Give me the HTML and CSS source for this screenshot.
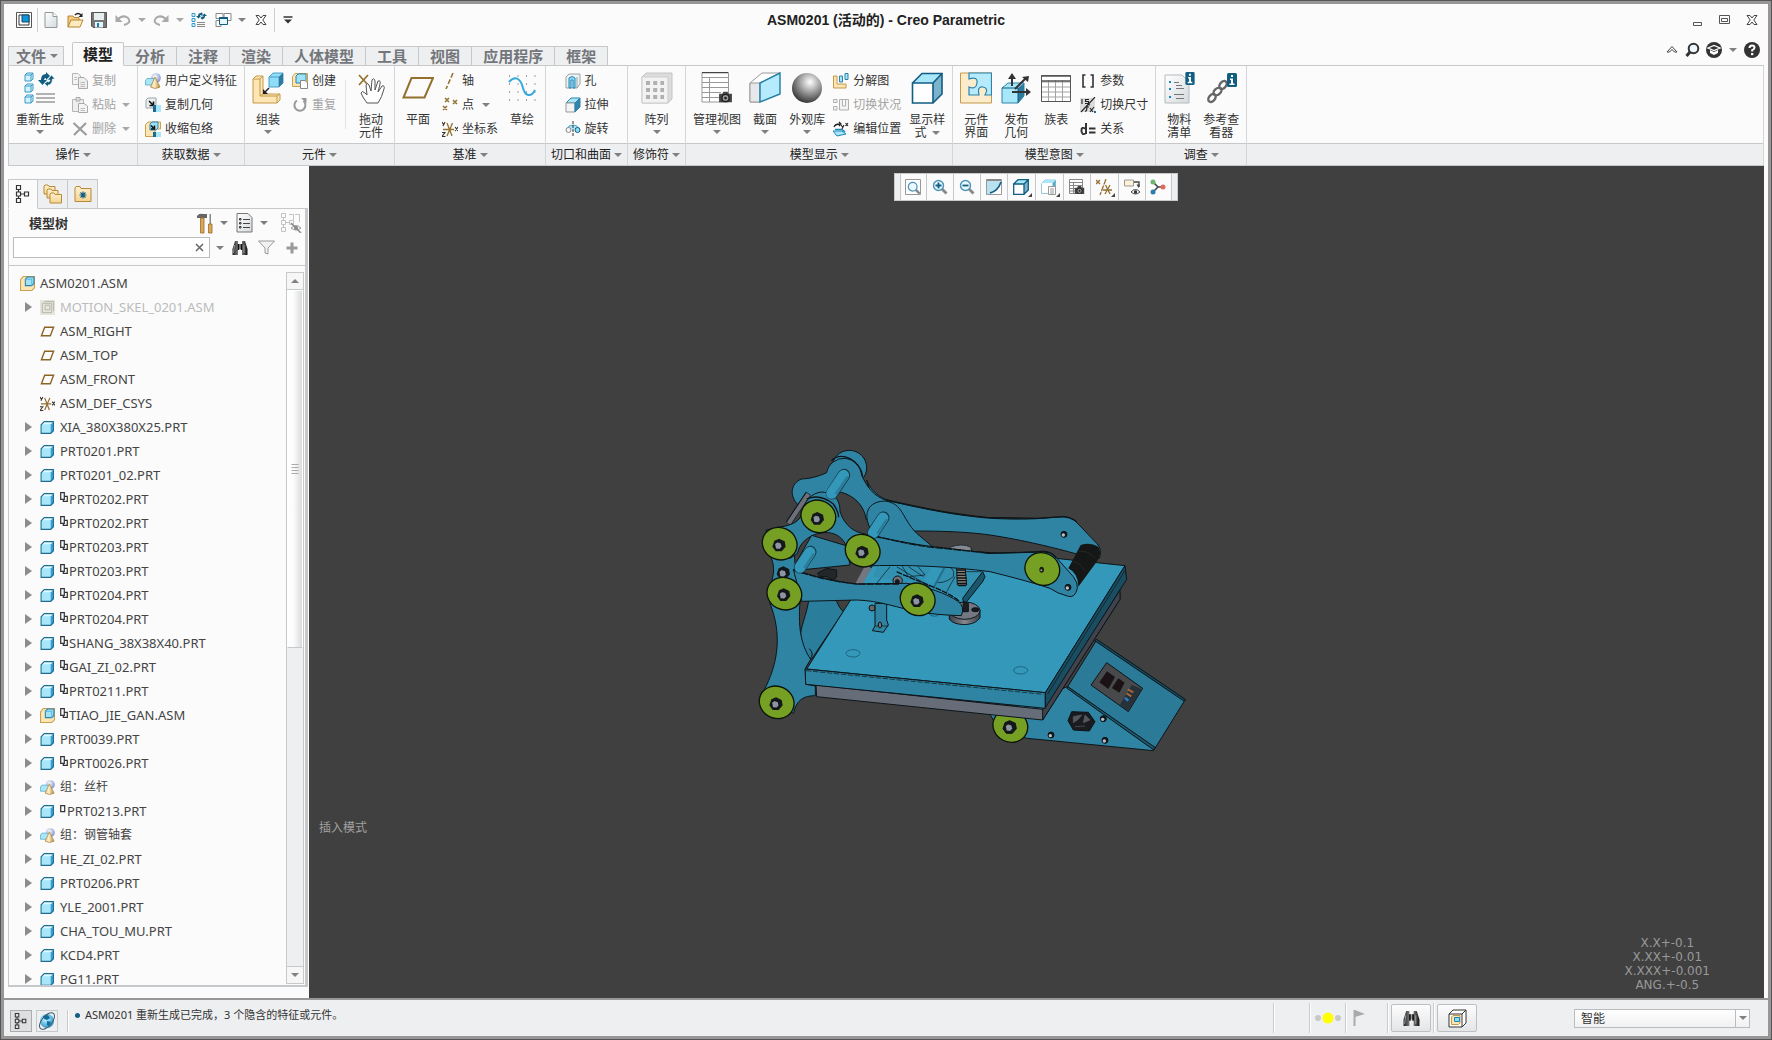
FILE: index.html
```html
<!DOCTYPE html>
<html lang="zh-CN">
<head>
<meta charset="utf-8">
<title>ASM0201 (活动的) - Creo Parametric</title>
<link rel="stylesheet" href="styles.css">
</head>
<body>
<svg class="sprite" aria-hidden="true">
  <defs>
    <linearGradient id="g-sheet" x1="0" y1="0" x2="1" y2="1"><stop offset="0" stop-color="#fff"/><stop offset="1" stop-color="#d5dadd"/></linearGradient>
    <linearGradient id="g-cone" x1="0" y1="0" x2="1" y2="0"><stop offset="0" stop-color="#e9cf8e"/><stop offset=".4" stop-color="#fdf0cd"/><stop offset="1" stop-color="#b98a3a"/></linearGradient>
    <linearGradient id="g-folder" x1="0" y1="0" x2="0" y2="1"><stop offset="0" stop-color="#fff1d0"/><stop offset="1" stop-color="#f4d491"/></linearGradient>
    <linearGradient id="g-dark" x1="0" y1="0" x2="1" y2="0"><stop offset="0" stop-color="#222"/><stop offset=".5" stop-color="#999"/><stop offset="1" stop-color="#111"/></linearGradient>
    <radialGradient id="g-ball" cx=".6" cy=".3" r=".7"><stop offset="0" stop-color="#fff"/><stop offset=".35" stop-color="#bbb"/><stop offset="1" stop-color="#3a3a3a"/></radialGradient>
    <radialGradient id="g-orb" cx=".4" cy=".35" r=".7"><stop offset="0" stop-color="#fff"/><stop offset="1" stop-color="#7b8cc8"/></radialGradient>
    <radialGradient id="g-globe" cx=".4" cy=".35" r=".7"><stop offset="0" stop-color="#dff5fd"/><stop offset=".5" stop-color="#6cc4e8"/><stop offset="1" stop-color="#2b8dbd"/></radialGradient>
  </defs>
  <symbol id="part" viewBox="0 0 14 14"><path d="M1 4 4 1H13V10L10 13H1Z" fill="#a8e6fa"/><path d="M10 4 13 1V10L10 13Z" fill="#3d9fd0"/><path d="M1 4 4 1H13L10 4Z" fill="#e6f9ff"/><path d="M1 4.500V12.500H10L12.500 10V1.500H4Z" fill="none" stroke="#1c6d94"/></symbol>
  <symbol id="asm" viewBox="0 0 14 14"><path d="M.5 3.500 3 .5H13.500V11L11 13.500H.5Z" fill="#fde5b4" stroke="#c9a050"/><path d="M5 3 7 1H13V7L11 9H5Z" fill="#9fe2fa" stroke="#2c83ab"/><path d="M5 3H11V9" fill="none" stroke="#5db6dc"/></symbol>
  <symbol id="skel" viewBox="0 0 16 16"><path d="M0 0H16V16H0Z" fill="#e6e6dc"/><path d="M2.500 3.500H12.500V13.500H2.500ZM4.500 1.500H14.500V11.500M5.500 5.500H10.500V10.500H5.500Z" fill="none" stroke="#b4b4a4"/></symbol>
  <symbol id="plane" viewBox="0 0 16 12"><path d="M5 1.500H14.500L11 10.500H1.500Z" fill="none" stroke="#8a6526" stroke-width="1.500"/></symbol>
  <symbol id="csys" viewBox="0 0 16 16"><path d="M1 8.500H12M5 2 10 15M10.500 2 5 15" fill="none" stroke="#94702f" stroke-width="1.300"/><path d="M0 1 1.500 3.500M3 1 1 5M13 6 16 10M16 6 13 10M0 11.500H3L0 15.500H3.500" fill="none" stroke="#333" stroke-width="1.100"/></symbol>
  <symbol id="shapes" viewBox="0 0 16 16"><circle cx="11" cy="5" r="4.800" fill="url(#g-orb)"/><path d="M.5 7.500 2 5.500H9V12H.5Z" fill="#a8e6fa" stroke="#5aabcc" stroke-width=".8"/><path d="M10 4 5.500 14Q10 17 15 14Z" fill="url(#g-cone)" stroke="#a57a30" stroke-width=".7"/></symbol>
  <symbol id="link2" viewBox="0 0 8 10"><path d="M.7.7H4.300V7.300H.7ZM4.300 4.300H7.300V9.300H3.300V7.300" fill="none" stroke="#333" stroke-width="1.200"/></symbol>
  <symbol id="link1" viewBox="0 0 6 8"><path d="M.7.7H4.700V6.700H.7Z" fill="none" stroke="#333" stroke-width="1.200"/></symbol>
  <symbol id="binoc" viewBox="0 0 16 16"><path d="M3 1H6V4H10V1H13L15.500 9V15H10V9H6V15H.5V9Z" fill="url(#g-dark)"/><path d="M2.500 5 1.500 13M12 5V13" stroke="#ccc" stroke-width="1" opacity=".6"/><path d="M6.500 4V10M9.500 4V10" stroke="#111" stroke-width="1.500"/></symbol>
  <symbol id="tree" viewBox="0 0 16 20"><path d="M1.500 1.500H5.500V5.500H1.500ZM1.500 8H5.500V12H1.500ZM1.500 14.500H5.500V18.500H1.500ZM9.500 8H13.500V12H9.500ZM3.500 5.500V8M3.500 12V14.500M5.500 10H9.500" fill="none" stroke="currentColor" stroke-width="1.200"/></symbol>
  <symbol id="camera" viewBox="0 0 14 12"><path d="M1 3H4L5 1H9L10 3H13V11H1Z" fill="#444"/><circle cx="7" cy="7" r="3.300" fill="#999" stroke="#111"/><circle cx="7" cy="7" r="1.300" fill="#222"/></symbol>
  <symbol id="info" viewBox="0 0 10 14"><rect width="10" height="14" rx="1.500" fill="#125d82"/><path d="M4 2H6V4H4ZM3 5.500H6V10.500H7.500V12H2.500V10.500H4V7H3Z" fill="#fff"/></symbol>
  <symbol id="closeX" viewBox="0 0 12 12"><path d="M1 1.500H4L6 4 8 1.500H11L7.800 6 11 10.500H8L6 8 4 10.500H1L4.200 6Z" fill="none" stroke="#444"/></symbol>
  <symbol id="lens" viewBox="0 0 16 16"><path d="M9.500 9.500 14.500 14.500" stroke="#888" stroke-width="2.800"/><circle cx="6.500" cy="6.500" r="5" fill="#eaf8ff" stroke="#4b93b8" stroke-width="1.400"/></symbol>
  <symbol id="cube" viewBox="0 0 32 32"><path d="M1.500 11 11 1.500H31V22L22 31H1.500Z" fill="#fff"/><path d="M1.500 11 11 1.500H31L22 11Z" fill="#a8e6fa"/><path d="M22 11 31 1.500V22L22 31Z" fill="#7ab4cc"/><path d="M1.500 11H22V31H1.500ZM1.500 11 11 1.500H31L22 11M31 1.500V22L22 31" fill="none" stroke="#125d82" stroke-width="1.600"/></symbol>
  <symbol id="cubeSmall" viewBox="0 0 16 16"><path d="M.7 5 5 .7H15.300V11L11 15.300H.7Z" fill="#fff"/><path d="M.7 5 5 .7H15.300L11 5Z" fill="#a8e6fa"/><path d="M11 5 15.300.7V11L11 15.300Z" fill="#7ab4cc"/><path d="M.7 5H11V15.300H.7ZM.7 5 5 .7H15.300L11 5M15.300.7V11L11 15.300" fill="none" stroke="#125d82" stroke-width="1.300"/></symbol>
</svg>

<div class="window">
  <header class="titlebar">
    <div class="quick">
      <button class="ib" aria-label="应用程序"><svg width="16" height="16"><path d="M.5.5H15.500V15.500H.5Z" fill="#fff" stroke="#555"/><path d="M3 3H13V13H3Z" fill="#fff" stroke="#333"/><path d="M6 3H13V10H6Z" fill="#0f93dc" stroke="#134a66"/></svg></button>
      <span class="vsep"></span>
      <button class="ib" aria-label="新建"><svg width="14" height="16"><path d="M1 .5H9L13 4.500V15.500H1Z" fill="url(#g-sheet)" stroke="#8d979c"/><path d="M9 .5V4.500H13" fill="#fff" stroke="#8d979c"/></svg></button>
      <button class="ib" aria-label="打开"><svg width="17" height="16"><path d="M1 15V4H6L7 5.500H12V8" fill="#f2cd83" stroke="#b5862f"/><path d="M1 15 4 8H16L13 15Z" fill="#fdeac0" stroke="#b5862f"/><path d="M8 3Q11 0 14 3" fill="none" stroke="#222" stroke-width="1.500"/><path d="M15.500 1V5H11.500Z" fill="#222"/></svg></button>
      <button class="ib" aria-label="保存"><svg width="16" height="16"><path d="M.5.500H15.500V15.500H2L.5 14Z" fill="#777" stroke="#555"/><path d="M3 1H13V8H3Z" fill="#e8eef0"/><path d="M4 10H12V15.500H4Z" fill="#e3f4fb"/><path d="M6 11H8V15H6Z" fill="#1a7fae"/></svg></button>
      <button class="ib" aria-label="撤消"><svg width="16" height="12"><path d="M2 6Q8 0 13 4 17 9 9 11" fill="none" stroke="#a9a9a9" stroke-width="2"/><path d="M.5 1V8H7.500Z" fill="#a9a9a9"/></svg></button>
      <button class="ib narrow" aria-label="撤消列表"><i class="caret light"></i></button>
      <button class="ib" aria-label="重做"><svg width="16" height="12"><path d="M14 6Q8 0 3 4-1 9 7 11" fill="none" stroke="#a9a9a9" stroke-width="2"/><path d="M15.500 1V8H8.500Z" fill="#a9a9a9"/></svg></button>
      <button class="ib narrow" aria-label="重做列表"><i class="caret light"></i></button>
      <button class="ib" aria-label="重新生成"><svg width="16" height="16"><path d="M1 1.500H4V4.500H1ZM1 6.500H4V9.500H1ZM1 11.500H4V14.500H1Z" fill="#d9f4ff" stroke="#3a9bc8"/><path d="M6 10.500H14M6 12.500H14M6 14.500H14" stroke="#888"/><path d="M5 4H7Q7 1 10 1V0L12 2 10 4V3Q9 3 9 4H10L7.500 6.500ZM16 4H14Q14 7 11.500 7V8L9.500 6 11.500 4V5Q12.500 5 12.500 4H11L13.500 1.500Z" fill="#125d82"/></svg></button>
      <button class="ib" aria-label="窗口"><svg width="17" height="16"><path d="M1 1.500H8V6.500H1ZM9 1.500H16V8.500H9ZM1 8.500H6V14.500H1Z" fill="#fff" stroke="#888"/><path d="M4.500 5.500H12.500V12.500H4.500Z" fill="#e6f7ff" stroke="#125d82"/><path d="M4.500 6H12.500" stroke="#125d82" stroke-width="2"/></svg></button>
      <button class="ib narrow" aria-label="窗口列表"><i class="caret"></i></button>
      <button class="ib" aria-label="关闭"><svg width="12" height="12"><use href="#closeX"/></svg></button>
      <span class="vsep"></span>
      <button class="ib" aria-label="自定义快速访问工具栏"><svg width="10" height="8"><path d="M.5 1H9.500" stroke="#333" stroke-width="1.500"/><path d="M1 3.500H9L5 7.500Z" fill="#333"/></svg></button>
    </div>
    <h1 class="title">ASM0201 (活动的) - Creo Parametric</h1>
    <div class="winctl">
      <button class="ib wide" aria-label="最小化"><svg width="12" height="12"><path d="M1.500 8.500H9.500V11.500H1.500Z" fill="none" stroke="#555"/></svg></button>
      <button class="ib wide" aria-label="最大化"><svg width="12" height="12"><path d="M.5 1.500H10.500V9.500H.5ZM2.500 4.500H8.500V7.500H2.500Z" fill="none" stroke="#555"/></svg></button>
      <button class="ib wide" aria-label="关闭窗口"><svg width="12" height="12"><use href="#closeX"/></svg></button>
    </div>
  </header>

  <div class="tabrow">
    <button class="tab file">文件<i class="caret"></i></button>
    <nav class="tabs">
      <button class="tab active">模型</button><button class="tab">分析</button><button class="tab">注释</button><button class="tab">渲染</button><button class="tab">人体模型</button><button class="tab">工具</button><button class="tab">视图</button><button class="tab">应用程序</button><button class="tab">框架</button>
    </nav>
    <div class="help">
      <button class="ib nar20" aria-label="折叠功能区"><svg width="12" height="10"><path d="M1 7 6 1.500 11 7H8.500L6 4.500 3.500 7Z" fill="none" stroke="#444"/></svg></button>
      <button class="ib nar20" aria-label="搜索"><svg width="15" height="16"><circle cx="8.500" cy="6.500" r="4.800" fill="#eef9ff" stroke="#333" stroke-width="2"/><path d="M5 10 1.500 14" stroke="#333" stroke-width="3"/></svg></button>
      <button class="ib" aria-label="学习"><svg width="16" height="16"><circle cx="8" cy="8" r="8" fill="#333"/><path d="M2 6 8 3.500 14 6 8 8.500Z" fill="#333" stroke="#fff" stroke-width="1.300"/><path d="M4 8V11L8 13 12 11V8L8 10Z" fill="#fff"/></svg></button>
      <button class="ib narrow" aria-label="学习列表"><i class="caret"></i></button>
      <button class="ib" aria-label="帮助"><svg width="16" height="16"><circle cx="8" cy="8" r="8" fill="#333"/><path d="M5.500 6Q5.500 3.500 8 3.500 10.500 3.500 10.500 5.800 10.500 7.200 8.200 8.200V9.500" fill="none" stroke="#fff" stroke-width="2"/><path d="M7 11H9.300V13.200H7Z" fill="#fff"/></svg></button>
    </div>
  </div>

  <section class="ribbon">
    <div class="group"><div class="gbody">
      <button class="big"><svg viewBox="0 0 32 32"><g fill="#d2f2fd" stroke="#3a9bc8"><path d="M1 3 3 1H9V7L7 9H1ZM1 14 3 12H9V18L7 20H1ZM1 25 3 23H9V29L7 31H1Z"/><path d="M1 3H7V9M7 3 9 1M1 14H7V20M7 14 9 12M1 25H7V31M7 25 9 23" fill="none"/></g><path d="M12 22H31M12 26H31M12 30H31" stroke="#9a9a9a" stroke-width="1.600"/><path d="M14 8H17Q17 2 22 2V0L26 4 22 8V6Q20 6 20 8H23L18.500 13Z" fill="#125d82"/><path d="M31 7H28.500Q28 13 24 13V15L20.500 11.500 24 9V10Q26 10 26 8H23.500L27.500 3Z" fill="#125d82" stroke="#fbfbfb" stroke-width=".6"/></svg><span>重新生成</span><i class="caret"></i></button>
      <div class="col">
        <button class="small off"><svg viewBox="0 0 16 16"><path d="M.5.500H6L8.500 3V11.500H.5Z" fill="#f3f3f3" stroke="#b5b5b5"/><path d="M6.500 4.500H12L15.500 8V15.500H6.500Z" fill="#eee" stroke="#aaa"/><path d="M8.500 9.500H13M8.500 11.500H13M8.500 13.500H13M2.500 4.500H5M2.500 6.500H5" stroke="#bbb"/></svg>复制</button>
        <button class="small off"><svg viewBox="0 0 16 16"><path d="M.5 2.500H11.500V14.500H.5Z" fill="#eee" stroke="#b5b5b5"/><path d="M4 .5H8V4H4Z" fill="#ddd" stroke="#aaa"/><path d="M6.500 6.500H12L15.500 9V15.500H6.500Z" fill="#f5f5f5" stroke="#aaa"/><path d="M8.500 11.500H13M8.500 13.500H13" stroke="#bbb"/></svg>粘贴<i class="caret light"></i></button>
        <button class="small off"><svg viewBox="0 0 16 16"><path d="M1.500 2 14.500 14M14 2 2 14" stroke="#9c9c9c" stroke-width="2.200"/></svg>删除<i class="caret light"></i></button>
      </div></div><button class="glabel">操作<i class="caret"></i></button></div>

    <div class="group"><div class="gbody">
      <div class="col">
        <button class="small"><svg><use href="#shapes"/></svg>用户定义特征</button>
        <button class="small"><svg viewBox="0 0 16 16"><path d="M1 3 3 1H11V9L9 11H1Z" fill="#eceff0" stroke="#9aa4a8"/><path d="M4 4 8 8M8.500 4.500V8.500H4.500" stroke="#111" stroke-width="1.600" fill="none"/><path d="M8 8H11V15H8Z" fill="#1a6c93"/><path d="M11 8H16V15H11Z" fill="#a8e6fa"/></svg>复制几何</button>
        <button class="small"><svg viewBox="0 0 16 16"><path d="M.5 3.500 3 1H15.500V8H10V15.500H.5Z" fill="#fde5b4" stroke="#c9a050"/><path d="M5 3 7 1H13V7L11 9H5Z" fill="#9fe2fa" stroke="#2c83ab"/><path d="M6 4.500 9.500 8M9.500 4.500V8H6" stroke="#111" stroke-width="1.500" fill="none"/><path d="M8 11H11V16H8Z" fill="#1a6c93"/><path d="M11 11H16V16H11Z" fill="#a8e6fa"/></svg>收缩包络</button>
      </div></div><button class="glabel">获取数据<i class="caret"></i></button></div>

    <div class="group"><div class="gbody">
      <button class="big"><svg viewBox="0 0 32 32"><path d="M1 7 4 4H11V22H28V28L25 31H1Z" fill="#fde5b4" stroke="#c49a48"/><path d="M8 7V24H25V31M1 7H8L11 4M8 24 11 22M25 24 28 22" fill="none" stroke="#c49a48"/><path d="M17 5 21 1H31V11L27 15H17Z" fill="#8fdcf8" stroke="#4b9fc4"/><path d="M17 5H27V15M27 5 31 1" fill="none" stroke="#4b9fc4"/><path d="M27 5 31 1V11L27 15Z" fill="#2f7ba0"/><path d="M17 16 12 21" stroke="#222" stroke-width="1.500"/><path d="M11 17V22H16Z" fill="#222"/></svg><span>组装</span><i class="caret"></i></button>
      <div class="col">
        <button class="small"><svg viewBox="0 0 16 16"><path d="M.5 3.500 3 .5H15.500V11L13 13.500H.5Z" fill="#fde5b4" stroke="#c9a050"/><path d="M4 3 6 1H14V8L12 10H4Z" fill="#9fe2fa" stroke="#2c83ab"/><path d="M8.500 7.500H13L15.500 10V15.500H8.500Z" fill="#fff" stroke="#888"/></svg>创建</button>
        <button class="small off"><svg viewBox="0 0 16 16"><path d="M11.500 4A5.500 5.500 0 1 1 5 3.500" fill="none" stroke="#999" stroke-width="2"/><path d="M9 1H14.500V6.500Z" fill="#999"/></svg>重复</button>
      </div>
      <span class="gsep"></span>
      <button class="big"><svg viewBox="0 0 32 32"><path d="M4 3 13 13M13 3 4 13" stroke="#94702f" stroke-width="1.700"/><path d="M12 31Q8 26 6 21 7 18 10 21L12 23 11 13Q12 10 14 13L16 19 17 8Q19 5 20 9L20 18 23 9Q26 8 25 12L23 20 27 14Q30 13 29 17 27 25 23 31Z" fill="#fff" stroke="#555"/></svg><span>拖动<br>元件</span></button>
      </div><button class="glabel">元件<i class="caret"></i></button></div>

    <div class="group"><div class="gbody">
      <button class="big"><svg viewBox="0 0 32 32"><path d="M9.500 6H31L22.500 25.500H1.500Z" fill="none" stroke="#94702f" stroke-width="2"/></svg><span>平面</span></button>
      <div class="col">
        <button class="small"><svg viewBox="0 0 16 16"><path d="M11 0 4 16" stroke="#94702f" stroke-width="1.500" stroke-dasharray="5 2"/></svg>轴</button>
        <button class="small"><svg viewBox="0 0 16 16"><path d="M3 1 7 5M7 1 3 5M11 3 15 7M15 3 11 7M1 9 5 13M5 9 1 13" stroke="#94702f" stroke-width="1.500"/></svg>点<i class="caret far"></i></button>
        <button class="small"><svg><use href="#csys"/></svg>坐标系</button>
      </div>
      <button class="big"><svg viewBox="0 0 32 32"><path d="M3 4H30M3 12H30M3 20H30M3 28H30" stroke="#444" stroke-dasharray="1 7.500"/><path d="M3 10C10 2 15 8 17 16S25 26 29 18" fill="none" stroke="#37a9dc" stroke-width="2"/></svg><span>草绘</span></button>
      </div><button class="glabel">基准<i class="caret"></i></button></div>

    <div class="group"><div class="gbody">
      <div class="col">
        <button class="small"><svg viewBox="0 0 16 16"><path d="M1 4 4 1H15V11L12 15H1Z" fill="#eef1f2" stroke="#9aa4a8"/><path d="M4 5Q7 2 10 5V15H8V7H6V15H4Z" fill="#8fdcf8" stroke="#1f87b5"/><path d="M12 4V15" stroke="#9aa4a8"/></svg>孔</button>
        <button class="small"><svg viewBox="0 0 16 16"><path d="M1 6 6 1H15L10 6Z" fill="#a8e6fa" stroke="#2c83ab"/><path d="M1 6H10V15H1Z" fill="#f4f4f4" stroke="#999"/><path d="M10 6 15 1V10L10 15Z" fill="#3186ad" stroke="#2c83ab"/></svg>拉伸</button>
        <button class="small"><svg viewBox="0 0 16 16"><path d="M2 8Q3 4 8 4T14 8" fill="#a8e6fa" stroke="#5daac8"/><circle cx="3.500" cy="9" r="2.500" fill="#f7f7f7" stroke="#888"/><circle cx="12.500" cy="9" r="2.500" fill="#8fdcf8" stroke="#125d82"/><path d="M8 0V16" stroke="#333" stroke-dasharray="3 1"/></svg>旋转</button>
      </div></div><button class="glabel">切口和曲面<i class="caret"></i></button></div>

    <div class="group"><div class="gbody">
      <button class="big"><svg viewBox="0 0 32 32"><path d="M1 5 5 1H31V27L27 31H1Z" fill="#dcdcdc" stroke="#c4c4c4"/><path d="M1 5H27V31H1Z" fill="#f2f2f2" stroke="#ccc"/><path d="M5 11H23M5 18H23M5 25H23" stroke="#b0b0b0" stroke-width="4" stroke-dasharray="4 3.200"/></svg><span>阵列</span><i class="caret"></i></button>
      </div><button class="glabel">修饰符<i class="caret"></i></button></div>

    <div class="group"><div class="gbody">
      <button class="big"><svg viewBox="0 0 32 32"><path d="M1 .5H27.500V30H1Z" fill="#fff" stroke="#999"/><path d="M1 5.500H27M1 10.500H27M1 15.500H27M1 20.500H20M1 25.500H20M8.500 5V30" stroke="#999"/><path d="M1 .5H27" stroke="#444" stroke-width="1.500"/><use href="#camera" x="17" y="18" width="15" height="14"/></svg><span>管理视图</span><i class="caret"></i></button>
      <button class="big"><svg viewBox="0 0 32 32"><path d="M1 11 13 1H31L11 11V30H1Z" fill="#fff" stroke="#999"/><path d="M1 11H11V30H1Z" fill="#e6e8e9" stroke="#999"/><path d="M11 11 31 1V22L11 30Z" fill="#b5ebfc" stroke="#1f7ca5" stroke-width="1.400"/></svg><span>截面</span><i class="caret"></i></button>
      <button class="big"><svg viewBox="0 0 32 32"><circle cx="16" cy="16" r="15" fill="url(#g-ball)"/></svg><span>外观库</span><i class="caret"></i></button>
      <div class="col">
        <button class="small"><svg viewBox="0 0 16 16"><path d="M.5 3H4V11H13V15H.5Z" fill="#fde5b4" stroke="#c49a48"/><path d="M6.500 3H9.500V9H6.500ZM12 .5H15V6.500H12Z" fill="#a8e6fa" stroke="#2c83ab"/></svg>分解图</button>
        <button class="small off"><svg viewBox="0 0 16 16"><path d="M.5 2.500H4V5.500H.5ZM.5 9.500H4V13H.5ZM6.500 2.500H15.500V13H6.500ZM9.500 2.500V9H12.500V2.500" fill="#f2f2f2" stroke="#b0b0b0"/></svg>切换状况</button>
        <button class="small"><svg viewBox="0 0 16 16"><path d="M1 6Q2 3 7 3M6 1 8 3 6 5" fill="none" stroke="#222" stroke-width="1.300"/><path d="M8 4 9.500 6M11 4 9 8M12.500 2 15 5M15 2 12.500 5" stroke="#222" stroke-width="1.100"/><path d="M0 10H9L13 13 4 15Z" fill="#a8e6fa" stroke="#1f87b5"/><path d="M2 8.500H9L12 11" fill="none" stroke="#1f87b5" stroke-width="1.500"/></svg>编辑位置</button>
      </div>
      <button class="big"><svg><use href="#cube"/></svg><span>显示样<br>式 <i class="caret"></i></span></button>
      </div><button class="glabel">模型显示<i class="caret"></i></button></div>

    <div class="group"><div class="gbody">
      <button class="big"><svg viewBox="0 0 32 32"><path d="M.5 1H31.500V31H.5Z" fill="#fdeccb" stroke="#c49a48"/><path d="M9 1H31.500V23H25Q29 16 23 15T19 23H9V15Q16 18 17 11T9 7Z" fill="#b5ebfc" stroke="#2c83ab" stroke-width="1.200"/></svg><span>元件<br>界面</span></button>
      <button class="big"><svg viewBox="0 0 32 32"><path d="M2 16 8 11H24V24L18 31H2Z" fill="#a8e6fa" stroke="#2c83ab"/><path d="M18 16 24 11V24L18 31Z" fill="#2f7ba0"/><path d="M2 16H18V31" fill="none" stroke="#125d82"/><path d="M12 14V4M12 20H28M15 17 26 6" stroke="#333" stroke-width="2"/><path d="M12 1 16 7H8ZM31 20 26 24V16ZM29 4 28 10 22 5Z" fill="#333"/></svg><span>发布<br>几何</span></button>
      <button class="big"><svg viewBox="0 0 32 32"><path d="M1.500 3.500H30.500V29.500H1.500Z" fill="#fff" stroke="#555"/><path d="M2 10H30M2 15H30M2 20H30M2 25H30M8.500 8V29M15.500 8V29M22.500 8V29" stroke="#a3a3a3"/><path d="M1 4H31M1 9H31" stroke="#555" stroke-width="1.500"/></svg><span>族表</span></button>
      <div class="col">
        <button class="small"><svg viewBox="0 0 16 16"><path d="M5.500 2H3V14H5.500M10.500 2H13V14H10.500" fill="none" stroke="#333" stroke-width="1.600"/></svg>参数</button>
        <button class="small"><svg viewBox="0 0 16 16"><path d="M0 1H15V15H0Z" fill="#dcdcdc"/><path d="M2 2V7M5 6.500H8.500V4.500H5.500V2.500H9M15 0 1 15M5 14Q7 15 7 9 8 7 10 8M5.500 10H9M10 11 13 15M14 10 10 15" fill="none" stroke="#222" stroke-width="1.100"/><path d="M14 14H16V16H14Z" fill="#0f75a8"/></svg>切换尺寸</button>
        <button class="small"><svg viewBox="0 0 16 16"><path d="M6 2V13M6 8Q1 5 1.500 10T6 12M9 7.500H15.500M9 11.500H15.500" fill="none" stroke="#333" stroke-width="2"/></svg>关系</button>
      </div></div><button class="glabel">模型意图<i class="caret"></i></button></div>

    <div class="group"><div class="gbody">
      <button class="big"><svg viewBox="0 0 32 32"><path d="M2 3H19L26 10V31H2Z" fill="url(#g-sheet)" stroke="#b5babd"/><path d="M11 10.500H16M13 16.500H21M11 22.500H21M13 26.500H21M13 13.500H19" stroke="#777"/><path d="M6 9H8V11H6ZM6 16H8V18H6ZM6 24H8V26H6Z" fill="#1787bd"/><use href="#info" x="22" y="0" width="10" height="13"/></svg><span>物料<br>清单</span></button>
      <button class="big"><svg viewBox="0 0 32 32"><g fill="none" stroke="#666" stroke-width="2.400"><ellipse cx="7" cy="26" rx="4.500" ry="3" transform="rotate(-50 7 26)"/><ellipse cx="12.500" cy="19.500" rx="4.500" ry="3" transform="rotate(-40 12.500 19.500)"/><ellipse cx="18" cy="13" rx="4.500" ry="3" transform="rotate(-50 18 13)"/></g><use href="#info" x="22" y="1" width="10" height="14"/></svg><span>参考查<br>看器</span></button>
      </div><button class="glabel">调查<i class="caret"></i></button></div>
    <div class="group rest"><div class="gbody"></div><div class="glabel"></div></div>
  </section>

  <main class="work">
    <aside class="side">
      <div class="stabs">
        <button class="stab on" aria-label="模型树"><svg width="16" height="20"><use href="#tree"/></svg></button>
        <button class="stab" aria-label="文件夹浏览器"><svg width="20" height="20"><g fill="url(#g-folder)" stroke="#b8893a"><path d="M1 10V2L2 1H5L6 2.500H12V10Z"/><path d="M4 14V6L5 5H8L9 6.500H15V14Z"/><path d="M7 19V10L8 9H11L12 10.500H18.500V19Z"/></g></svg></button>
        <button class="stab" aria-label="收藏夹"><svg width="18" height="18"><path d="M1 16.500V3L2 1.500H6L7 3.500H17V16.500Z" fill="url(#g-folder)" stroke="#b8893a"/><path d="M9 6.500V13.500M5.500 10H12.500M6.500 7.500 11.500 12.500M11.500 7.500 6.500 12.500" stroke="#125d82" stroke-width="1.100"/></svg></button>
      </div>
      <div class="panel">
        <div class="phead">
          <h2>模型树</h2>
          <button class="ib nar20" aria-label="设置"><svg width="17" height="21"><path d="M1 3Q3 0 7 1H11V5H7L1 5Z" fill="#666"/><path d="M4.500 5H8V20H4.500Z" fill="#d9a65a" stroke="#9c6b26" stroke-width=".8"/><path d="M13.500 1H15V11H13.500Z" fill="#888"/><path d="M12.500 11H16V20H12.500Z" fill="#d9a65a" stroke="#9c6b26" stroke-width=".8"/></svg></button>
          <button class="ib nar20" aria-label="设置列表"><i class="caret"></i></button>
          <button class="ib nar20" aria-label="显示"><svg width="17" height="20"><path d="M1 .500H12L16 4.500V19H1Z" fill="url(#g-sheet)" stroke="#777"/><path d="M7 6.500H14M7 10.500H14M7 14.500H14" stroke="#444"/><path d="M3.500 5.500H5V7H3.500ZM3.500 9.500H5V11H3.500ZM3.500 13.500H5V15H3.500Z" fill="none" stroke="#333"/></svg></button>
          <button class="ib nar20" aria-label="显示列表"><i class="caret"></i></button>
          <button class="ib last" aria-label="隐藏"><svg width="21" height="20"><path d="M.5.500H4.500V4.500H.5ZM.5 7.500H4.500V11.500H.5ZM.5 14.500H4.500V18.500H.5ZM8.500 7.500H12.500V11.500H8.500ZM2.500 4.500V7.500M2.500 11.500V14.500M4.500 9.500H8.500M8 1.500H12.500V7M14 1.500H18.500V9" fill="none" stroke="#c3c3c3"/><path d="M10 15Q15 10 20 15 15 19 10 15Z" fill="#eee" stroke="#999"/><circle cx="15" cy="15" r="2" fill="#888"/><path d="M10 10 20 20" stroke="#888" stroke-width="1.500"/></svg></button>
        </div>
        <div class="psearch">
          <div class="sbox"><input type="text" aria-label="搜索模型树"><button class="clr" aria-label="清除"><svg width="9" height="9"><path d="M1 1 8 8M8 1 1 8" stroke="#666" stroke-width="1.500"/></svg></button></div>
          <button class="ib narrow" aria-label="搜索选项"><i class="caret"></i></button>
          <button class="ib mid" aria-label="查找"><svg width="16" height="16"><use href="#binoc"/></svg></button>
          <button class="ib mid" aria-label="过滤器"><svg width="17" height="15"><path d="M.5 1H16.500L10 8V14L7 13V8Z" fill="#f1f1f1" stroke="#999"/></svg></button>
          <button class="ib mid" aria-label="添加"><svg width="12" height="12"><path d="M6 .5V11.500M.5 6H11.500" stroke="#999" stroke-width="3"/></svg></button>
        </div>
        <div class="ptree">
          <ul class="nodes">
            <li class="root"><svg class="ic"><use href="#asm"/></svg>ASM0201.ASM</li>
            <li class="dim"><b></b><svg class="ic"><use href="#skel"/></svg>MOTION_SKEL_0201.ASM</li>
            <li><b class="none"></b><svg class="ic"><use href="#plane"/></svg>ASM_RIGHT</li>
            <li><b class="none"></b><svg class="ic"><use href="#plane"/></svg>ASM_TOP</li>
            <li><b class="none"></b><svg class="ic"><use href="#plane"/></svg>ASM_FRONT</li>
            <li><b class="none"></b><svg class="ic"><use href="#csys"/></svg>ASM_DEF_CSYS</li>
            <li><b></b><svg class="ic"><use href="#part"/></svg>XIA_380X380X25.PRT</li>
            <li><b></b><svg class="ic"><use href="#part"/></svg>PRT0201.PRT</li>
            <li><b></b><svg class="ic"><use href="#part"/></svg>PRT0201_02.PRT</li>
            <li><b></b><svg class="ic"><use href="#part"/></svg><svg class="lk"><use href="#link2"/></svg>PRT0202.PRT</li>
            <li><b></b><svg class="ic"><use href="#part"/></svg><svg class="lk"><use href="#link2"/></svg>PRT0202.PRT</li>
            <li><b></b><svg class="ic"><use href="#part"/></svg><svg class="lk"><use href="#link2"/></svg>PRT0203.PRT</li>
            <li><b></b><svg class="ic"><use href="#part"/></svg><svg class="lk"><use href="#link2"/></svg>PRT0203.PRT</li>
            <li><b></b><svg class="ic"><use href="#part"/></svg><svg class="lk"><use href="#link2"/></svg>PRT0204.PRT</li>
            <li><b></b><svg class="ic"><use href="#part"/></svg><svg class="lk"><use href="#link2"/></svg>PRT0204.PRT</li>
            <li><b></b><svg class="ic"><use href="#part"/></svg><svg class="lk"><use href="#link2"/></svg>SHANG_38X38X40.PRT</li>
            <li><b></b><svg class="ic"><use href="#part"/></svg><svg class="lk"><use href="#link2"/></svg>GAI_ZI_02.PRT</li>
            <li><b></b><svg class="ic"><use href="#part"/></svg><svg class="lk"><use href="#link2"/></svg>PRT0211.PRT</li>
            <li><b></b><svg class="ic"><use href="#asm"/></svg><svg class="lk"><use href="#link2"/></svg>TIAO_JIE_GAN.ASM</li>
            <li><b></b><svg class="ic"><use href="#part"/></svg>PRT0039.PRT</li>
            <li><b></b><svg class="ic"><use href="#part"/></svg><svg class="lk"><use href="#link2"/></svg>PRT0026.PRT</li>
            <li class="set"><b></b><svg class="ic"><use href="#shapes"/></svg>组：丝杆</li>
            <li><b></b><svg class="ic"><use href="#part"/></svg><svg class="lk one"><use href="#link1"/></svg>PRT0213.PRT</li>
            <li class="set"><b></b><svg class="ic"><use href="#shapes"/></svg>组：钢管轴套</li>
            <li><b></b><svg class="ic"><use href="#part"/></svg>HE_ZI_02.PRT</li>
            <li><b></b><svg class="ic"><use href="#part"/></svg>PRT0206.PRT</li>
            <li><b></b><svg class="ic"><use href="#part"/></svg>YLE_2001.PRT</li>
            <li><b></b><svg class="ic"><use href="#part"/></svg>CHA_TOU_MU.PRT</li>
            <li><b></b><svg class="ic"><use href="#part"/></svg>KCD4.PRT</li>
            <li><b></b><svg class="ic"><use href="#part"/></svg>PG11.PRT</li>
          </ul>
          <div class="scroll">
            <button class="sbtn" aria-label="向上"><i class="caret up"></i></button>
            <div class="track"><div class="thumb"><svg width="8" height="12"><path d="M.5 1.500H7.500M.5 4.500H7.500M.5 7.500H7.500M.5 10.500H7.500" stroke="#aaa"/></svg></div></div>
            <button class="sbtn" aria-label="向下"><i class="caret"></i></button>
          </div>
        </div>
      </div>
    </aside>

    <section class="canvas">
      <div class="viewbar">
        <button aria-label="重新调整"><svg viewBox="0 0 16 16"><path d="M.5.500H15.500V15.500H.5Z" fill="#fff" stroke="#999"/><use href="#lens" x="2" y="2" width="14" height="14"/></svg></button>
        <button aria-label="放大"><svg viewBox="0 0 16 16"><use href="#lens"/><path d="M6.500 3.500V9.500M3.500 6.500H9.500" stroke="#125d82" stroke-width="1.800"/></svg></button>
        <button aria-label="缩小"><svg viewBox="0 0 16 16"><use href="#lens"/><path d="M3.500 6.500H9.500" stroke="#125d82" stroke-width="1.800"/></svg></button>
        <button aria-label="重画"><svg viewBox="0 0 16 16"><path d="M.5.500H15.500V15.500H.5Z" fill="#b9e2f1" stroke="#999"/><path d="M15 3V15H4Q13 13 15 3Z" fill="#fff"/><path d="M4 14Q12 12 15 3" fill="none" stroke="#125d82" stroke-width="1.600"/><path d="M1 1H15" stroke="#8a8a8a" stroke-width="2"/></svg></button>
        <button class="more" aria-label="显示样式"><svg><use href="#cubeSmall"/></svg></button>
        <button class="more" aria-label="已保存方向"><svg viewBox="0 0 16 16"><path d="M.5 4.500 4 1H14.500V11L11 14.500H.5Z" fill="#fff" stroke="#9bc7da"/><path d="M1 4 4 1H14L11 4Z" fill="#a8e6fa"/><path d="M11.500 4 14.500 1V10H11.500Z" fill="#5aa9ca"/><path d="M7.500 7.500H14.500V15.500H7.500Z" fill="#fff" stroke="#999"/><path d="M9 10H13M9 12H13M9 14H13" stroke="#999"/></svg></button>
        <button aria-label="视图管理器"><svg viewBox="0 0 16 16"><path d="M.5.500H13.500V14.500H.5ZM.5 3.500H13.500M.5 6.500H13.500M.5 9.500H7M.5 12H7M4.500 3V14" fill="#fff" stroke="#888"/><use href="#camera" x="5" y="6" width="11" height="10"/></svg></button>
        <button class="more" aria-label="基准显示过滤器"><svg viewBox="0 0 16 16"><path d="M0 1 4 5M4 1 0 5M10 0 4 16" stroke="#94702f" stroke-width="1.300" stroke-dasharray="6 1"/><path d="M7 11H16M9.500 6 14 15M14 6 9 15" stroke="#94702f" stroke-width="1.300"/></svg></button>
        <button aria-label="注释显示"><svg viewBox="0 0 16 16"><path d="M.5 1H9.500V7H.5Z" fill="#fff1d4" stroke="#999"/><path d="M10 3H15V8" fill="none" stroke="#444" stroke-width="1.300"/><path d="M12.500 5.500H16L14.500 9Z" fill="#444"/><path d="M7 13Q11.500 8 16 13 11.500 17 7 13Z" fill="#fff" stroke="#444"/><circle cx="11.500" cy="13" r="1.700" fill="#333"/></svg></button>
        <button aria-label="旋转中心"><svg viewBox="0 0 16 16"><path d="M3 3 8 8 3 13M8 8H13" fill="none" stroke="#444" stroke-width="1.500"/><circle cx="3" cy="3" r="2.500" fill="#6cb56c"/><circle cx="3" cy="13" r="2.500" fill="#2b7fae"/><circle cx="13" cy="8" r="2.500" fill="#dd6b60"/></svg></button>
      </div>

      <svg class="model" viewBox="30 30 1350 960" role="img" aria-label="ASM0201 装配模型">
        <defs>
          <linearGradient id="m-metal" x1="0" y1="0" x2="1" y2="0"><stop offset="0" stop-color="#3d4148"/><stop offset=".5" stop-color="#85888f"/><stop offset="1" stop-color="#3d4148"/></linearGradient>
          <g id="bolt"><path d="M-14-14 0-20 17-12 20 4 8 18-10 18-20 4Z" fill="#15181b"/><path d="M-13-4-5-10 6-7 9 4 2 12-10 11Z" fill="#8d94a2" stroke="#000" stroke-width="2"/></g>
          <g id="disc"><ellipse rx="53" ry="48" fill="#76a024" stroke="#0c1408" stroke-width="4" transform="rotate(25)"/></g>
          <g id="hole"><circle r="9" fill="#15181b"/><circle r="5" cx="-2" cy="2" fill="#b9bec8" stroke="none"/></g>
        </defs>
        <g stroke="#0c1519" stroke-width="3" stroke-linejoin="round">
          <!-- control box -->
          <path d="M748 850 L760 870 840 920 862 925 1240 962 1245 955 983 770 900 800Z" fill="#2f84a3"/>
          <path d="M1070 630 1335 810 1245 955 983 770Z" fill="#2b7a98"/>
          <path d="M1064 632 1070 628 1336 808 1333 814Z" fill="#17495c"/>
          <path d="M983 770 1245 952 1240 959 981 775Z" fill="#1d586e"/>
          <path d="M1100 698 1208 775 1165 845 1053 765Z" fill="#47494b"/>
          <path d="M1101 724 1125 741 1105 777 1078 757ZM1135 745 1154 758 1138 788 1116 774Z" fill="#1a1214" stroke="none"/>
          <path d="M1175 765 1205 777 1164 842 1140 824Z" fill="#263139" stroke="none"/>
          <path d="M1163 778 1180 787M1160 790 1174 799" stroke="#a4683a" stroke-width="6"/><path d="M1155 803 1165 812" stroke="#2f78bd" stroke-width="8"/>
          <path d="M995 845 1045 847 1065 875 1048 903 1000 900 984 872Z" fill="#191b1e"/>
          <path d="M1000 860 1025 855 1015 868 1000 878ZM1035 855 1050 870 1030 878ZM1005 890 1035 888" fill="#54575c" stroke="#5b5e64" stroke-width="2"/>
          <use href="#hole" x="1090" y="866"/><use href="#hole" x="1095" y="931"/><use href="#hole" x="933" y="915"/>
          <use href="#disc" x="811" y="888"/><use href="#bolt" x="809" y="892"/>
          <!-- lower platen -->
          <path d="M228 765 908 838 1140 490 1140 508 908 870 230 800Z" fill="#676c79"/>
          <path d="M908 838 1140 480 1140 508 908 870Z" fill="#40434c"/>
          <!-- rear leg -->
          <path d="M208 500C200 560 180 590 182 620 185 650 200 680 215 687L310 545C295 530 290 515 285 500Z" fill="#2b7d9c"/>
          <!-- rear upper arm -->
          <path d="M380 150C400 200 440 212 480 220 560 238 640 255 740 264 800 268 850 268 890 266L970 260Q990 262 1005 272L1070 340Q1088 358 1078 385L1010 372C950 355 850 330 750 315 680 305 600 303 520 303L420 280Z" fill="#2f84a3"/>
          <path d="M440 210C560 238 640 253 740 262L890 265 970 260Q995 262 1010 275" fill="none" stroke-width="4"/>
          <use href="#hole" x="972" y="313"/>
          <!-- upper platen -->
          <path d="M200 717 408 390 520 350 900 380 1155 407 916 788Z" fill="#3498bb"/>
          <path d="M195 717 916 788 916 835 197 763Z" fill="#2f84a3"/>
          <path d="M916 788 1155 407 1160 448 916 833Z" fill="#194d61"/>
          <path d="M198 722 910 793" fill="none" stroke-dasharray="16 5" stroke-width="2"/><path d="M923 792 1156 420" fill="none" stroke-width="2"/>
          <ellipse cx="339" cy="670" rx="21" ry="11" fill="none" stroke="#1d6580"/><ellipse cx="842" cy="721" rx="21" ry="11" fill="none" stroke="#1d6580"/><path d="M568 553Q585 565 600 552" fill="none" stroke="#1d6580"/>
          <!-- rear bracket -->
          <circle cx="328" cy="113" r="52" fill="#2f84a3"/>
          <path d="M260 128C230 142 205 146 185 147 150 160 148 200 175 225L250 205 305 187C350 200 375 235 378 268L470 235 445 213C400 200 380 170 365 135A53 53 0 0 0 260 128Z" fill="#2f84a3"/>
          <path d="M274 92C305 62 360 90 368 140" fill="none" stroke-width="4"/>
          <path d="M400 310C370 270 370 215 435 213 490 220 485 265 530 310L580 352 560 372 430 330Z" fill="#2f84a3"/>
          <path d="M205 190 145 280" stroke-width="18"/><path d="M205 192 146 280" stroke="#6d7079" stroke-width="13"/>
          <!-- clamp hardware -->
          <path d="M405 520H440V570L445 585 430 607 397 602 405 588Z" fill="#2f84a3"/><path d="M405 588H445" fill="none" stroke-width="2"/><ellipse cx="420" cy="585" rx="5" ry="9" fill="#777"/><circle cx="396" cy="534" r="9" fill="#666"/>
          <path d="M385 410 355 465" stroke="#74777f" stroke-width="20"/>
          <path d="M410 410 660 415 725 425 672 505 560 470 400 440Z" fill="#3290b1" stroke="none"/>
          <path d="M410 460 450 410M485 405 505 440 555 435 530 405M600 400Q650 410 640 440 610 465 580 455M620 485 645 440M505 410 550 440M470 410 570 470M660 425 725 425" fill="none" stroke-width="2"/>
          <path d="M728 425 668 505 672 525 728 455 735 440Z" fill="#19556b"/>
          <path d="M650 412H675L680 465H652Z" fill="#8a8075"/><path d="M650 420H678M650 428H678M650 436H679M650 444H680M652 452H680M652 460H680M655 467H678" stroke-width="4"/>
          <path d="M628 550V567C640 588 705 592 720 562V540Z" fill="url(#m-metal)"/><ellipse cx="674" cy="542" rx="46" ry="26" fill="#747883"/><ellipse cx="706" cy="539" rx="11" ry="6" fill="#181a1d"/><path d="M670 515 685 520V545L668 545Z" fill="#1e1e20"/>
          <path d="M630 352Q665 338 693 352V368L632 362Z" fill="#858993" stroke-width="2"/>
          <path d="M565 462 597 412" stroke="#3498bb" stroke-width="36"/><path d="M582 470 614 412" stroke="#256f8a" stroke-width="6"/>
          <circle cx="473" cy="452" r="14" fill="#6d7079"/><circle cx="472" cy="455" r="6" fill="#15181b"/>
          <path d="M232 430 260 415 290 420 290 440 280 452 262 440 240 440Z" fill="#222629"/>
          <!-- front leg -->
          <path d="M78 300Q110 288 160 330L165 400 185 470C170 580 180 640 212 688L195 717 197 763 226 768V797C190 797 170 810 160 850L62 800 80 765C115 690 125 610 90 520L96 450C105 420 100 395 90 375Z" fill="#2f84a3"/>
          <path d="M208 656Q224 672 210 687" fill="#2b7591"/>
          <!-- front bracket -->
          <path d="M245 186C290 190 300 215 300 245 315 290 345 307 375 312L350 400 320 350C310 325 290 310 265 308 215 305 180 335 172 370L150 385 100 330 110 292C140 290 175 280 185 255 190 215 215 188 245 186Z" fill="#2f84a3"/>
          <path d="M215 316 318 347 330 405 200 418 170 395Z" fill="#2f84a3"/>
          <path d="M200 207Q240 190 280 222 296 245 296 262" fill="none" stroke-width="4"/>
          <!-- lower front arm -->
          <path d="M160 418C220 440 290 455 350 462L500 460C560 470 620 490 655 515Q675 530 664 557 590 555 530 545C480 535 420 512 350 510L185 514Z" fill="#2f84a3"/>
          <path d="M160 420C220 440 290 457 350 462L480 462" fill="none" stroke-width="4" stroke-dasharray="22 3"/>
          <path d="M470 425C520 450 620 480 660 515" fill="none" stroke-width="4" stroke-dasharray="18 3"/>
          <!-- upper front arm -->
          <path d="M370 312C440 325 520 345 600 352L750 370C800 368 850 368 890 365 930 360 940 370 960 395L1000 440Q1015 460 1012 475 1005 505 985 499 950 490 930 475C870 455 810 440 750 425 640 410 500 403 370 408Z" fill="#2f84a3"/>
          <path d="M400 318C480 335 540 350 600 354L750 370" fill="none" stroke-width="4" stroke-dasharray="24 3"/><path d="M740 370 890 366Q930 360 950 385" fill="none" stroke-width="4"/>
          <use href="#hole" x="984" y="472"/>
        </g>
        <!-- cross pins -->
        <g stroke-linecap="round"><path d="M312 135 276 190" stroke="#12333f" stroke-width="37"/><path d="M311 136 275 190" stroke="#3498bb" stroke-width="33"/><path d="M321 142 289 190" stroke="#2a7c9a" stroke-width="7"/>
        <path d="M430 263 400 308" stroke="#12333f" stroke-width="37"/><path d="M429 264 400 308" stroke="#3498bb" stroke-width="33"/><path d="M439 270 414 308" stroke="#2a7c9a" stroke-width="7"/>
        <path d="M211 366 180 412" stroke="#12333f" stroke-width="37"/><path d="M210 367 180 412" stroke="#3498bb" stroke-width="33"/><path d="M220 373 194 412" stroke="#2a7c9a" stroke-width="7"/></g>
        <path d="M1022 345Q1050 335 1075 350 1088 370 1070 395L1015 470Q1015 430 985 415Z" fill="#141716"/><path d="M1018 365Q1045 360 1065 385M1000 395Q1020 395 1035 425" fill="none" stroke="#232827" stroke-width="3"/>
        <use href="#disc" x="235" y="259"/><use href="#bolt" x="232" y="266"/>
        <use href="#disc" x="119" y="341"/><use href="#bolt" x="117" y="346"/>
        <use href="#disc" x="368" y="362"/><use href="#bolt" x="366" y="367"/>
        <use href="#bolt" x="130" y="429"/>
        <use href="#disc" x="133" y="491"/><use href="#bolt" x="131" y="495"/>
        <use href="#disc" x="533" y="508"/><use href="#bolt" x="531" y="513"/>
        <use href="#disc" x="110" y="817"/><use href="#bolt" x="108" y="822"/>
        <use href="#disc" x="907" y="417"/><ellipse cx="905" cy="419" rx="7" ry="9" fill="#1a2208"/><circle cx="904" cy="421" r="3" fill="#99a"/>
      </svg>

      <p class="mode">插入模式</p>
      <p class="tol">X.X+-0.1<br>X.XX+-0.01<br>X.XXX+-0.001<br>ANG.+-0.5</p>
    </section>
  </main>

  <footer class="status">
    <button class="sq on" aria-label="显示导航器"><svg width="14" height="18"><use href="#tree"/></svg></button>
    <button class="sq" aria-label="显示浏览器"><svg width="18" height="18"><circle cx="9" cy="9" r="7" fill="url(#g-globe)"/><path d="M5 4 10 3 12 6 9 8 6 7ZM9 9 13 10 11 14 9 13Z" fill="#0f6d9e"/><ellipse cx="9" cy="9" rx="10" ry="5" fill="none" stroke="#456" transform="rotate(-50 9 9)"/></svg></button>
    <span class="ssep first"></span>
    <p class="msg"><i></i>ASM0201 重新生成已完成，3 个隐含的特征或元件。</p>
    <span class="ssep"></span>
    <span class="cell blank"></span>
    <span class="ssep"></span>
    <span class="cell lights"><svg width="28" height="12"><circle cx="4" cy="6" r="3" fill="#c8c8c8"/><circle cx="14" cy="6" r="5.500" fill="#ff0"/><circle cx="24" cy="6" r="3" fill="#c8c8c8"/></svg></span>
    <span class="ssep"></span>
    <span class="cell flag"><svg width="14" height="18"><path d="M1.500 1V17" stroke="#aaa" stroke-width="2"/><path d="M2 1 12 5 2 8Z" fill="#aaa"/></svg></span>
    <span class="ssep"></span>
    <button class="sbig" aria-label="查找"><svg width="17" height="17"><use href="#binoc"/></svg></button>
    <span class="ssep"></span>
    <button class="sbig" aria-label="选择框"><svg width="19" height="19"><path d="M1 5 5 1H18V14L14 18H1Z" fill="#fff" stroke="#333"/><path d="M1 5H14V18M14 5 18 1" fill="none" stroke="#333"/><path d="M3.500 8 5 6.500H12V14L10.500 15.500H3.500Z" fill="#fde5b4" stroke="#c49a48"/><path d="M6.500 8.500H11.500V12.500H6.500Z" fill="#8fdcf8" stroke="#1f87b5"/></svg></button>
    <label class="filter"><select aria-label="选择过滤器"><option>智能</option></select><i class="drop"><i class="caret"></i></i></label>
  </footer>
</div>
</body>
</html>
```
FILE: styles.css
```css
* { box-sizing: border-box; }
body { margin: 0; font: 12px/16px "Open Sans", "Noto Sans CJK SC", sans-serif; color: #333; background: #fbfbfb; }
h1, h2, p, ul { margin: 0; padding: 0; }
button { font: inherit; color: inherit; border: 0; background: none; padding: 0; margin: 0; }
svg { display: block; flex: none; }
.sprite { position: absolute; width: 0; height: 0; }

.window { height: 100vh; min-height: 600px; display: flex; flex-direction: column; border: 4px solid #979595; outline: 1px solid #555; outline-offset: -1px; background: #fbfbfb; }

.caret { display: inline-block; flex: none; width: 0; height: 0; border: 4px solid transparent; border-top-color: #808080; border-bottom: 0; }
.caret.light { border-top-color: #a8a8a8; }
.caret.up { border-top: 0; border-bottom: 4px solid #808080; }

.ib { width: 24px; height: 24px; display: flex; align-items: center; justify-content: center; }
.ib.narrow { width: 14px; }
.ib.nar20 { width: 20px; }
.ib.mid { width: 26px; }
.ib.wide { width: 27px; }

/* title bar */
.titlebar { display: grid; grid-template-columns: 1fr auto 1fr; align-items: center; height: 32px; margin-bottom: 6px; flex: none; }
.quick { display: flex; align-items: center; padding-left: 8px; }
.vsep { width: 1px; height: 24px; margin: 0 1px; background: #ccc; }
.title { font: bold 14px/20px "Liberation Sans", "Noto Sans CJK SC", sans-serif; color: #222; }
.winctl { display: flex; justify-content: flex-end; padding-right: 3px; }

/* ribbon tabs */
.tabrow { display: flex; align-items: flex-end; height: 24px; flex: none; padding: 0 4px; position: relative; z-index: 1; margin-bottom: -1px; }
.tab { height: 20px; padding: 0 11px; font: bold 15px/16px "Noto Sans CJK SC", sans-serif; color: #73767a; background: #eeeff1; border: 1px solid #c5c9cc; border-left: 0; }
.tab.file { display: flex; align-items: center; gap: 4px; padding: 0 5px 0 7px; border-left: 1px solid #c5c9cc; margin-right: 8px; }
.tabs { display: flex; align-items: flex-end; }
.tab.active { height: 24px; line-height: 20px; padding: 0 10px; background: #fbfbfb; color: #222; border-left: 1px solid #c5c9cc; border-bottom-color: #fbfbfb; border-radius: 2px 2px 0 0; }
.help { margin-left: auto; display: flex; align-items: center; height: 32px; padding-right: 0; }

/* ribbon */
.ribbon { display: flex; flex: none; margin: 0 4px; border: 1px solid #c5c9cc; border-right: 0; }
.group { display: flex; flex-direction: column; border-right: 1px solid #d4d6d8; }
.group.rest { flex: 1; }
.gbody { display: flex; justify-content: center; height: 77px; padding: 0 3px; }
.glabel { display: flex; align-items: center; justify-content: center; gap: 3px; height: 22px; padding: 0 5px; background: #eeeff1; border-top: 1px solid #c5c9cc; color: #222; }
.big { display: flex; flex-direction: column; align-items: center; min-width: 40px; padding: 6px 4px 0; line-height: 13px; }
.big > svg { width: 32px; height: 32px; margin-bottom: 9px; }
.big > .caret { margin-top: 4px; }
.big span .caret { vertical-align: 2px; margin-left: 2px; }
.col { display: flex; flex-direction: column; padding-top: 3px; }
.small { display: flex; align-items: center; gap: 4px; height: 24px; padding: 0 4px; line-height: 16px; white-space: nowrap; }
.small > svg { width: 16px; height: 16px; }
.small .caret { margin-left: 2px; }
.small .caret.far { margin-left: 4px; }
.off { color: #a3a3a3; }
.gsep { width: 1px; margin: 14px 5px; background: #e2e3e4; }

/* work area */
.work { flex: 1; min-height: 0; display: flex; padding-right: 4px; }
.side { width: 305px; flex: none; display: flex; flex-direction: column; padding: 13px 1px 11px 4px; }
.stabs { display: flex; position: relative; z-index: 1; margin-bottom: -1px; }
.stab { width: 30px; height: 30px; display: flex; align-items: center; justify-content: center; background: #eeeff1; border: 1px solid #c5c9cc; border-left: 0; }
.stab.on { background: #fbfbfb; border-left: 1px solid #c5c9cc; border-bottom-color: #fbfbfb; color: #333; }
.panel { flex: 1; min-height: 0; display: flex; flex-direction: column; border: 1px solid #c5c9cc; border-right-width: 3px; border-bottom-width: 2px; }
.phead { display: flex; align-items: center; height: 28px; padding: 0 2px 0 20px; }
.phead h2 { font: bold 13px/20px "Noto Sans CJK SC", sans-serif; color: #333; margin-right: auto; }
.phead .ib.last { width: 24px; margin-left: 5px; }
.psearch { display: flex; align-items: center; height: 29px; padding: 0 0 7px 4px; border-bottom: 1px solid #c5c9cc; }
.sbox { flex: 1; display: flex; align-items: center; height: 21px; margin-right: 3px; background: #fff; border: 1px solid #b9bdc0; }
.sbox input { flex: 1; min-width: 0; border: 0; outline: 0; background: none; font: inherit; height: 18px; }
.clr { width: 20px; height: 18px; display: flex; align-items: center; justify-content: center; }
.ptree { flex: 1; min-height: 0; display: flex; padding-top: 5px; }
.nodes { flex: 1; min-width: 0; overflow: hidden; list-style: none; font: 13px/24px "Noto Sans", "Noto Sans CJK SC", sans-serif; color: #444; }
.nodes li { display: flex; align-items: center; height: 24px; padding-left: 16px; white-space: nowrap; }
.nodes .root { padding-left: 11px; }
.nodes .set { font-size: 12px; }
.nodes .dim { color: #bbb; }
.nodes b { width: 7px; height: 10px; margin-right: 8px; flex: none; background: #8c8c8c; clip-path: polygon(0 0, 100% 50%, 0 100%); }
.nodes b.none { visibility: hidden; }
.ic { width: 15px; height: 15px; margin-right: 5px; }
.lk { width: 8px; height: 10px; margin: 0 1px 5px 0; }
.lk.one { width: 6px; height: 8px; }
.scroll { width: 18px; display: flex; flex-direction: column; margin: 1px 1px 1px 0; background: #eeeff1; border: 1px solid #c5c9cc; }
.sbtn { height: 16px; flex: none; display: flex; align-items: center; justify-content: center; background: #f6f6f7; }
.track { flex: 1; border: solid #c5c9cc; border-width: 1px 0; }
.thumb { height: 53%; display: flex; align-items: center; justify-content: center; background: linear-gradient(90deg, #fff, #fbfbfb 40%, #d9dadb); border: 1px solid #fff; border-bottom: 1px solid #c5c9cc; }

/* 3D canvas */
.canvas { flex: 1; min-width: 0; position: relative; background: #404040; overflow: hidden; color: #a0a0a0; }
.viewbar { position: absolute; top: 7px; left: 40.2%; display: flex; height: 28px; padding: 0 5px; background: #eeeff1; border: 1px solid #c5c9cc; }
.viewbar button { width: 27px; display: flex; align-items: center; justify-content: center; background: #fbfbfb; border-left: 1px solid #c5c9cc; position: relative; }
.viewbar button:first-child { width: 26px; }
.viewbar button:last-child { border-right: 1px solid #c5c9cc; }
.viewbar svg { width: 16px; height: 16px; }
.viewbar .more { width: 28px; }
.viewbar .more::after { content: ""; position: absolute; right: 3px; bottom: 3px; border: 2px solid #444; border-top-color: transparent; border-left-color: transparent; }
.model { position: absolute; width: 450px; height: 320px; left: calc(50% - 287px); top: calc(50% - 142px); }
.mode { position: absolute; left: 10px; bottom: 162px; }
.tol { position: absolute; right: 54px; bottom: 6px; text-align: center; font: 12px/14px "DejaVu Sans", sans-serif; color: #999; }

/* status bar */
.status { flex: none; height: 38px; display: flex; align-items: center; padding: 0 18px 0 6px; background: #eeeff1; border-top: 2px solid #979797; }
.sq { width: 22px; height: 22px; margin: 6px 4px 0 0; display: flex; align-items: center; justify-content: center; border: 1px solid #c5c9cc; }
.sq.on { background: #dedfe1; border-color: #a9adb0; }
.ssep { flex: none; width: 2px; height: 30px; background: #c9cbcd; border-right: 1px solid #fff; }
.ssep.first { height: 22px; margin: 6px 6px 0 5px; }
.msg { display: flex; align-items: center; gap: 5px; margin-right: auto; padding-bottom: 6px; color: #333; font: 11px/16px "Noto Sans", "Noto Sans CJK SC", sans-serif; }
.msg i { width: 5px; height: 5px; border-radius: 50%; background: #125d82; }
.cell { display: flex; align-items: center; }
.blank, .lights { width: 34px; justify-content: center; }
.flag { width: 40px; padding-left: 6px; }
.sbig { width: 40px; height: 28px; margin: 0 2px; display: flex; align-items: center; justify-content: center; background: linear-gradient(#fcfcfc, #e4e5e7); border: 1px solid #bcc0c3; border-radius: 2px; }
.filter { position: relative; display: flex; width: 176px; margin-left: 95px; }
.filter select { appearance: none; width: 100%; height: 19px; padding: 0 24px 0 6px; font: inherit; line-height: 17px; color: #333; border: 1px solid #b9bdc0; border-radius: 0; background: linear-gradient(#fff, #f1f1f2); }
.drop { position: absolute; right: 0; top: 0; width: 15px; height: 19px; display: flex; align-items: center; justify-content: center; border: 1px solid #b9bdc0; pointer-events: none; }
```
